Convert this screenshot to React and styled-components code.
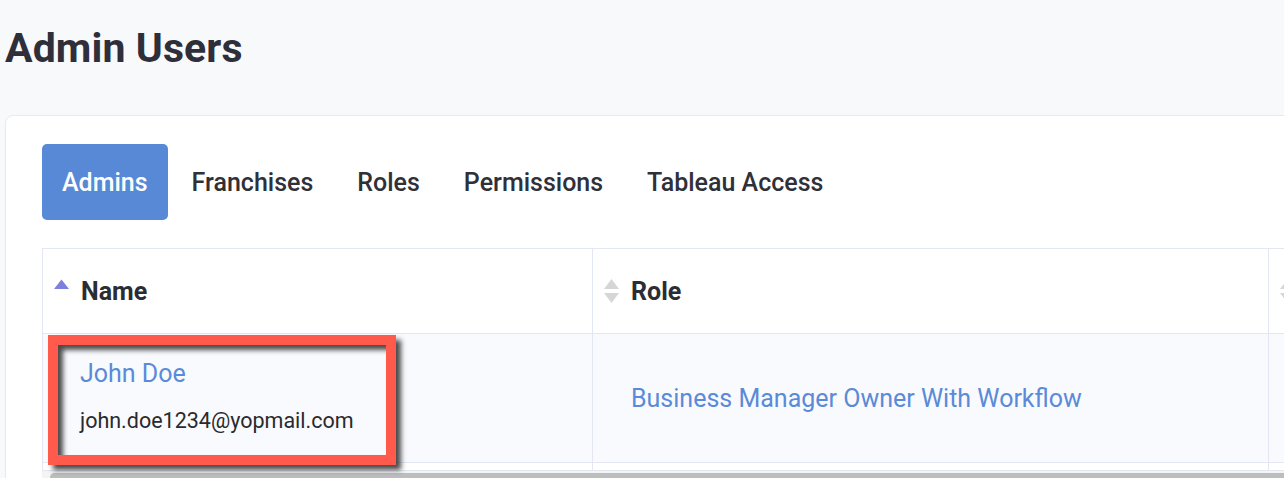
import React from "react";
import styled, { createGlobalStyle } from "styled-components";

const GlobalStyle = createGlobalStyle`
  html, body {
    margin: 0;
    padding: 0;
    background: #f8f9fb;
    font-family: Roboto, "Liberation Sans", Arial, sans-serif;
    overflow: hidden;
  }
`;

const Page = styled.div`
  padding: 0 0 0 5px;
  width: 1600px;
`;

const Title = styled.h1`
  margin: 0;
  padding-top: 24px;
  height: 115px;
  box-sizing: border-box;
  font-size: 41px;
  line-height: 48px;
  font-weight: 700;
  color: #2e2f3a;
  letter-spacing: 0.1px;
`;

const Card = styled.div`
  background: #fff;
  border: 1px solid #e6e9f1;
  border-radius: 8px;
  padding: 28px 0 0 36px;
  min-height: 400px;
`;

const Tabs = styled.div`
  display: flex;
  gap: 4px;
  margin-bottom: 28px;
`;

const Tab = styled.button`
  height: 76px;
  padding: 0 20px;
  border: none;
  border-radius: 5px;
  font-family: inherit;
  font-size: 25px;
  font-weight: 500;
  background: ${(p) => (p.$active ? "#5789d6" : "transparent")};
  color: ${(p) => (p.$active ? "#fff" : "#2f3038")};
  cursor: pointer;
`;

const TableWrap = styled.div`
  width: 1300px;
`;

const Table = styled.table`
  border-collapse: collapse;
  table-layout: fixed;
  width: 1700px;
`;

const Th = styled.th`
  height: 84px;
  padding: 0 0 0 11px;
  border: 1px solid #e2e7f3;
  text-align: left;
  font-size: 25px;
  font-weight: 700;
  color: #2b2c34;
  background: #fff;
`;

const HeadInner = styled.div`
  display: flex;
  align-items: center;
  gap: 12px;
`;

const Row = styled.tr`
  background: ${(p) => (p.$shaded ? "#f9fafd" : "#fff")};
`;

const Td = styled.td`
  position: relative;
  height: ${(p) => p.$h || 129}px;
  padding: ${(p) => p.$pad || "0 0 0 38px"};
  border: 1px solid #e2e7f3;
  vertical-align: ${(p) => p.$valign || "middle"};
  box-sizing: border-box;
`;

const NameLink = styled.a`
  display: block;
  font-size: 25px;
  line-height: 30px;
  color: #5a8ad8;
  text-decoration: none;
`;

const Email = styled.div`
  margin-top: 19px;
  font-size: 21.5px;
  line-height: 26px;
  color: #2a2a2e;
`;

const RoleLink = styled.a`
  font-size: 25px;
  color: #5a8ad8;
  text-decoration: none;
`;

/* annotation frame drawn over the first name cell */
const Highlight = styled.div`
  position: absolute;
  left: 5px;
  top: 1px;
  width: 348px;
  height: 130px;
  box-sizing: border-box;
  border: 10px solid #ff5a4b;
  box-shadow: 5px 5px 5px rgba(30, 30, 30, 0.8),
    inset 5px 5px 5px rgba(30, 30, 30, 0.8);
  pointer-events: none;
`;

const ScrollTrack = styled.div`
  height: 9px;
  background: #f4f4f4;
  padding: 2px 0 0 8px;
`;

const ScrollThumb = styled.div`
  height: 9px;
  width: 1400px;
  background: #bdbdbd;
  border-radius: 5px;
`;

const SortIcon = ({ dir }) => (
  <svg width="15" height="26" viewBox="0 0 15 26">
    {dir === "asc" ? (
      <path d="M0 11 L7.5 1.5 L15 11 Z" fill="#7d80dd" />
    ) : (
      <>
        <path d="M0 11 L7.5 1 L15 11 Z" fill="#d6d6d6" />
        <path d="M0 15 L7.5 25 L15 15 Z" fill="#d6d6d6" />
      </>
    )}
  </svg>
);

const tabs = ["Admins", "Franchises", "Roles", "Permissions", "Tableau Access"];

export default function App() {
  return (
    <>
      <GlobalStyle />
      <Page>
        <Title>Admin Users</Title>
        <Card>
          <Tabs>
            {tabs.map((t, i) => (
              <Tab key={t} $active={i === 0}>
                {t}
              </Tab>
            ))}
          </Tabs>
          <TableWrap>
            <Table>
              <colgroup>
                <col style={{ width: 550 }} />
                <col style={{ width: 676 }} />
                <col style={{ width: 474 }} />
              </colgroup>
              <thead>
                <tr>
                  <Th>
                    <HeadInner>
                      <SortIcon dir="asc" />
                      Name
                    </HeadInner>
                  </Th>
                  <Th>
                    <HeadInner>
                      <SortIcon />
                      Role
                    </HeadInner>
                  </Th>
                  <Th>
                    <HeadInner>
                      <SortIcon />
                    </HeadInner>
                  </Th>
                </tr>
              </thead>
              <tbody>
                <Row $shaded>
                  <Td $valign="top" $pad="25px 0 0 37px">
                    <NameLink href="#">John Doe</NameLink>
                    <Email>john.doe1234@yopmail.com</Email>
                    <Highlight />
                  </Td>
                  <Td>
                    <RoleLink href="#">Business Manager Owner With Workflow</RoleLink>
                  </Td>
                  <Td />
                </Row>
                <Row>
                  <Td $h={8} $pad="0" />
                  <Td $h={8} $pad="0" />
                  <Td $h={8} $pad="0" />
                </Row>
              </tbody>
            </Table>
            <ScrollTrack>
              <ScrollThumb />
            </ScrollTrack>
          </TableWrap>
        </Card>
      </Page>
    </>
  );
}
